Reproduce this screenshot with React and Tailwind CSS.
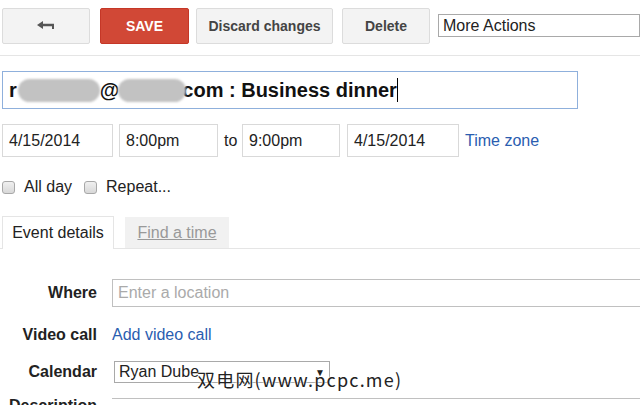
import React from "react";

const font = { fontFamily: '"Liberation Sans", Arial, sans-serif' };

function Btn({ children, className = "" }) {
  return (
    <div
      className={`h-[36px] flex items-center justify-center rounded-[2px] border border-[#dcdcdc] bg-[#f3f3f3] text-[14px] font-bold text-[#444] ${className}`}
    >
      {children}
    </div>
  );
}

function Field({ children, className = "" }) {
  return (
    <div
      className={`h-[33px] flex items-center border border-[#d9d9d9] bg-white px-[6px] text-[16px] text-[#222] ${className}`}
    >
      {children}
    </div>
  );
}

function Checkbox() {
  return (
    <span className="inline-block w-[13px] h-[13px] rounded-[3px] border border-[#a8a8a8] bg-gradient-to-b from-[#f0f0f0] to-[#d8d8d8]" />
  );
}

export default function App() {
  return (
    <div className="relative w-[640px] h-[405px] overflow-hidden bg-white" style={font}>
      {/* Toolbar */}
      <div className="flex items-start pt-[8px] pl-[2px]">
        <Btn className="w-[88px]">
          <svg width="18" height="10" viewBox="0 0 18 10">
            <path d="M0 4 L6 0 L6 2.8 L17 2.8 L17 8 L15 8 L15 5.2 L6 5.2 L6 8 Z" fill="#555" />
          </svg>
        </Btn>
        <div className="ml-[10px] w-[89px] h-[36px] flex items-center justify-center rounded-[2px] bg-[#d14836] border border-[#c53727] text-white text-[14px] font-bold">
          SAVE
        </div>
        <Btn className="ml-[7px] w-[137px]">Discard changes</Btn>
        <Btn className="ml-[9px] w-[88px]">Delete</Btn>
        <div className="ml-[8px] mt-[6px] h-[23px] flex-1 border border-[#a9a9a9] bg-white pl-[4px] text-[16px] leading-[21px] text-[#222]">
          More Actions
        </div>
      </div>
      <div className="mt-[11px] h-px bg-[#e5e5e5]" />

      {/* Title */}
      <div className="mt-[15px] ml-[2px] w-[576px] h-[38px] border border-[#8fb0dc] flex items-center pl-[6px] text-[20px] font-bold text-[#111]">
        <span>r</span>
        <span className="inline-block w-[82px] h-[23px] rounded-full bg-[#c2c2c2] blur-[1px] ml-[1px]" />
        <span>@</span>
        <span className="inline-block w-[68px] h-[23px] rounded-full bg-[#c2c2c2] blur-[1px] -ml-[1px] mr-[-4px]" />
        <span>com : Business dinner</span>
        <span className="inline-block w-px h-[24px] bg-black" />
      </div>

      {/* Date row */}
      <div className="mt-[15px] ml-[2px] flex items-center">
        <Field className="w-[111px]">4/15/2014</Field>
        <Field className="ml-[6px] w-[99px]">8:00pm</Field>
        <span className="ml-[6px] w-[14px] text-[16px] text-[#222]">to</span>
        <Field className="ml-[4px] w-[98px]">9:00pm</Field>
        <Field className="ml-[7px] w-[112px]">4/15/2014</Field>
        <span className="ml-[6px] text-[16px] text-[#2a5db0]">Time zone</span>
      </div>

      {/* Checkboxes */}
      <div className="mt-[18px] ml-[2px] flex items-center text-[16px] text-[#222]">
        <Checkbox />
        <span className="ml-[9px]">All day</span>
        <span className="ml-[12px] flex"><Checkbox /></span>
        <span className="ml-[9px]">Repeat...</span>
      </div>

      {/* Tabs */}
      <div className="mt-[17px] flex items-end">
        <div className="w-[2px] border-b border-[#e5e5e5] h-px" />
        <div className="w-[112px] h-[33px] border border-b-0 border-[#e5e5e5] bg-white flex items-center justify-center text-[16px] text-[#222]">
          Event details
        </div>
        <div className="w-[11px] border-b border-[#e5e5e5] h-px" />
        <div className="w-[104px] h-[32px] bg-[#f1f1f1] border-b border-[#e5e5e5] flex items-center justify-center text-[16px] text-[#999] underline">
          Find a time
        </div>
        <div className="flex-1 border-b border-[#e5e5e5] h-px" />
      </div>

      {/* Form rows */}
      <div className="mt-[30px] flex items-center">
        <div className="w-[97px] text-right text-[16px] font-bold text-[#222]">Where</div>
        <div className="ml-[15px] flex-1 h-[28px] border border-[#c0c0c0] border-r-0 flex items-center pl-[5px] text-[16px] text-[#aaa]">
          Enter a location
        </div>
      </div>
      <div className="mt-[16px] flex items-center">
        <div className="w-[97px] text-right text-[16px] font-bold text-[#222]">Video call</div>
        <div className="ml-[15px] text-[16px] text-[#2a5db0]">Add video call</div>
      </div>
      <div className="mt-[13px] flex items-center">
        <div className="w-[97px] text-right text-[16px] font-bold text-[#222]">Calendar</div>
        <div className="ml-[17px] w-[216px] h-[22px] border border-[#a9a9a9] flex items-center pl-[4px] pr-[4px] text-[16px] text-[#222] justify-between">
          <span>Ryan Dube</span>
          <span className="text-[10px] text-[#222]">▼</span>
        </div>
      </div>
      <div className="mt-[14px] flex items-start">
        <div className="w-[97px] text-right text-[16px] font-bold text-[#222] leading-[16px]">Description</div>
        <div className="ml-[15px] flex-1 h-[30px] border-t border-[#c0c0c0]" />
      </div>

      {/* Watermark overlay */}
      <div
        className="absolute left-[197px] top-[366px] text-[18px] text-[#222] tracking-[1.2px]"
        style={{ fontFamily: '"Noto Sans CJK SC", "DejaVu Sans", sans-serif', textShadow: "0 0 2px #fff, 0 0 2px #fff" }}
      >
        双电网(www.pcpc.me)
      </div>
    </div>
  );
}
